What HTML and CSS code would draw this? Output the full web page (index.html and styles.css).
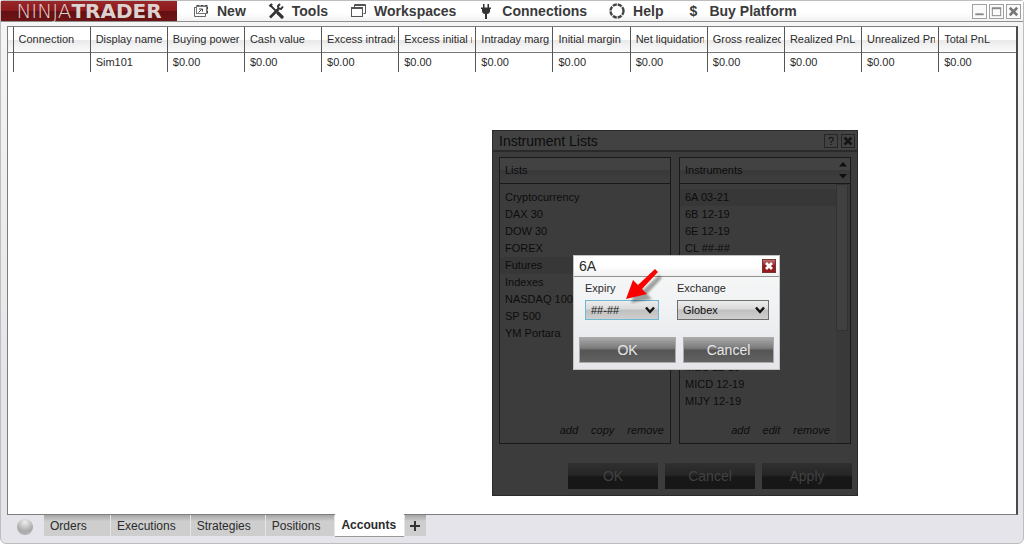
FILE: index.html
```html
<!DOCTYPE html>
<html lang="en">
<head>
<meta charset="utf-8">
<title>NinjaTrader Control Center</title>
<link rel="stylesheet" href="styles.css">
</head>
<body>
<div class="window">
  <header class="titlebar">
    <div class="logo"><span class="logo-light">NINJA</span><span class="logo-bold">TRADER</span></div>
    <nav class="menu" aria-label="Main menu">
      <button class="menu-item" type="button">
        <svg class="icon" viewBox="0 0 16 16" fill="none"><path d="M3.500 2.500h11v8" stroke="#444" stroke-dasharray="3 1"/><rect x="3.500" y="3.500" width="10" height="7" stroke="#777"/><path d="M1.500 4v9.500h11v-3M1.500 4.500h2" stroke="#666"/><path d="M5.500 9.500l3-3M6 6h3.500v2.500" stroke="#444"/></svg>
        New</button>
      <button class="menu-item" type="button">
        <svg class="icon" viewBox="0 0 16 16" fill="none" stroke="#333"><path d="M2 14.500l8.500-8.500" stroke-width="2.600"/><path d="M15 3.500l-2 2.500-2.500-.5L10 3l2-2" stroke-width="2"/><path d="M3 3l5.500 5.500" stroke-width="1.800"/><path d="M1.500 3.500l2.500-2.500" stroke-width="2.400"/><path d="M10 10l4 4" stroke-width="3.200" stroke-linecap="round"/></svg>
        Tools</button>
      <button class="menu-item" type="button">
        <svg class="icon" viewBox="0 0 16 16" fill="none" stroke="#555"><path d="M4.500 4V1.500h11v9h-2M4.500 2.500h11"/><rect x="1.500" y="4.500" width="11" height="9"/><path d="M1.500 5.500h11"/></svg>
        Workspaces</button>
      <button class="menu-item" type="button">
        <svg class="icon" viewBox="0 0 16 16" fill="#333"><path d="M5 1h1.500v3.500h3V1H11v3.500h2V6h-1v2c0 2-1.500 3-3 3v5H7v-5c-1.500 0-3-1-3-3V6H3V4.500h2z"/></svg>
        Connections</button>
      <button class="menu-item" type="button">
        <svg class="icon" viewBox="0 0 16 16" fill="none" stroke="#444"><circle cx="8" cy="8" r="6.500" stroke-width="2.400" stroke-dasharray="4.100 1.005"/></svg>
        Help</button>
      <button class="menu-item" type="button"><span class="icon dollar" aria-hidden="true">$</span>Buy Platform</button>
    </nav>
    <div class="controls">
      <button class="control" type="button" aria-label="Minimize"><svg viewBox="0 0 14 14"><path d="M2.500 10h9" stroke="#888" stroke-width="2"/></svg></button>
      <button class="control" type="button" aria-label="Maximize"><svg viewBox="0 0 14 14" fill="none" stroke="#888"><rect x="2.500" y="3.500" width="9" height="8"/><path d="M2 3.500h10" stroke-width="2"/></svg></button>
      <button class="control" type="button" aria-label="Close"><svg viewBox="0 0 14 14"><path d="M3 3l8 8M11 3l-8 8" stroke="#777" stroke-width="2.800"/></svg></button>
    </div>
  </header>

  <main class="content">
    <table class="accounts">
      <colgroup><col class="gutter"><col span="13"></colgroup>
      <thead>
        <tr><td></td><th><div>Connection</div></th><th><div>Display name</div></th><th><div>Buying power</div></th><th><div>Cash value</div></th><th><div>Excess intraday</div></th><th><div>Excess initial margin</div></th><th><div>Intraday margin</div></th><th><div>Initial margin</div></th><th><div>Net liquidation</div></th><th><div>Gross realized</div></th><th><div>Realized PnL</div></th><th><div>Unrealized PnL</div></th><th><div>Total PnL</div></th></tr>
      </thead>
      <tbody>
        <tr><td></td><td></td><td>Sim101</td><td>$0.00</td><td>$0.00</td><td>$0.00</td><td>$0.00</td><td>$0.00</td><td>$0.00</td><td>$0.00</td><td>$0.00</td><td>$0.00</td><td>$0.00</td><td>$0.00</td></tr>
      </tbody>
    </table>
  </main>

  <footer class="tabbar">
    <span class="status"></span>
    <div class="tabs">
      <button class="tab" type="button">Orders</button>
      <button class="tab" type="button">Executions</button>
      <button class="tab" type="button">Strategies</button>
      <button class="tab" type="button">Positions</button>
      <button class="tab active" type="button">Accounts</button>
      <button class="tab add-tab" type="button" aria-label="Add tab"><svg viewBox="0 0 10 10"><path d="M5 0v10M0 5h10" stroke="#333" stroke-width="2"/></svg></button>
    </div>
  </footer>

  <section class="lists-dialog" aria-label="Instrument Lists">
    <div class="lists-title">
      <h2>Instrument Lists</h2>
      <button class="dim-control" type="button">?</button>
      <button class="dim-control" type="button" aria-label="Close lists"><svg viewBox="0 0 12 12"><path d="M2.500 2.500l7 7M9.500 2.500l-7 7" stroke="#151515" stroke-width="2.600"/></svg></button>
    </div>
    <div class="panels">
      <div class="panel">
        <h3 class="panel-head">Lists</h3>
        <div class="panel-body">
          <ul class="items"><li>Cryptocurrency</li><li>DAX 30</li><li>DOW 30</li><li>FOREX</li><li class="selected">Futures</li><li>Indexes</li><li>NASDAQ 100</li><li>SP 500</li><li>YM Portara</li></ul>
          <div class="links"><a href="#">add</a><a href="#">copy</a><a href="#">remove</a></div>
        </div>
      </div>
      <div class="panel">
        <h3 class="panel-head">Instruments<svg class="sorter" viewBox="0 0 14 24" fill="#0e0e0e"><path d="M7 4l4 4.500H3zM7 20.500l4-4.500H3z"/></svg></h3>
        <div class="panel-body with-scroll">
          <ul class="items"><li class="selected">6A 03-21</li><li>6B 12-19</li><li>6E 12-19</li><li>CL ##-##</li><li class="blank-rows"></li><li>MES 12-19</li><li>MICD 12-19</li><li>MIJY 12-19</li></ul>
          <div class="links"><a href="#">add</a><a href="#">edit</a><a href="#">remove</a></div>
          <div class="scroll"><div class="thumb"></div></div>
        </div>
      </div>
    </div>
    <div class="lists-actions"><button type="button">OK</button><button type="button">Cancel</button><button type="button">Apply</button></div>
  </section>

  <form class="edit-dialog" aria-label="6A">
    <div class="edit-title">
      <h2>6A</h2>
      <button class="edit-close" type="button" aria-label="Close"><svg viewBox="0 0 12 12"><path d="M3 3l6 6M9 3l-6 6" stroke="#fff" stroke-width="2.800"/></svg></button>
    </div>
    <div class="fields">
      <div class="field">
        <label for="expiry">Expiry</label>
        <div class="select"><select id="expiry" class="focused"><option>##-##</option></select><svg viewBox="0 0 10 8"><path d="M1 1.500l4 4.500 4-4.500" fill="none" stroke="#111" stroke-width="2.400"/></svg></div>
      </div>
      <div class="field">
        <label for="exchange">Exchange</label>
        <div class="select"><select id="exchange"><option>Globex</option></select><svg viewBox="0 0 10 8"><path d="M1 1.500l4 4.500 4-4.500" fill="none" stroke="#111" stroke-width="2.400"/></svg></div>
      </div>
    </div>
    <div class="edit-actions"><button type="button">OK</button><button type="button">Cancel</button></div>
    <svg class="pointer" viewBox="0 0 40 40"><path class="pointer-shadow" d="M6 35l7-18 5 5L34 7l3 3-15 16 5 5z"/><path d="M1 31L8 12l5 5L30 1l3 3L17 21l5 5z" fill="#fb0000"/></svg>
  </form>
</div>
</body>
</html>
```
FILE: styles.css
```css
* { box-sizing: border-box; }
body {
  margin: 0;
  background: #fff;
  color: #2b2b2b;
  font: 11px/13px "Liberation Sans", Arial, sans-serif;
}
button, select { font: inherit; color: inherit; margin: 0; padding: 0; border: 0; background: none; }
h2, h3, ul { margin: 0; padding: 0; font-weight: normal; list-style: none; }
svg { display: block; }

.window {
  position: relative;
  display: flex;
  flex-direction: column;
  min-height: 100vh;
  padding-bottom: 6px;
  border: 1px solid #bdbdbd;
  border-radius: 3px 3px 6px 6px;
  background: linear-gradient(#f6f6f6, #ececec 40%, #e5e4ea 70%);
}

/* Title bar */
.titlebar {
  display: flex;
  align-items: center;
  height: 21px;
  border-bottom: 1px solid #8f8f8f;
  background: linear-gradient(#fff 60%, #f2f2f2);
}
.logo {
  display: flex;
  justify-content: center;
  align-items: center;
  align-self: stretch;
  width: 176px;
  background: linear-gradient(#98282a, #8d1a1d 48%, #641012 52%, #6d1416);
  color: #dcd2cf;
  font: 20px/20px "DejaVu Sans", sans-serif;
}
.logo-light { font-weight: 200; }
.logo-bold { font-weight: bold; }
.menu { display: flex; flex: 1; gap: 22px; padding-left: 16px; }
.menu-item {
  display: flex;
  align-items: center;
  gap: 8px;
  color: #3a3a3a;
  font-size: 14px;
  font-weight: bold;
  line-height: 20px;
  white-space: nowrap;
}
.icon { flex: none; width: 16px; height: 16px; }
.dollar { line-height: 16px; text-align: center; }
.controls { display: flex; gap: 2px; padding-right: 2px; }
.control { width: 15px; height: 15px; border: 1px solid #a0a0a0; background: #fafafa; }

/* Accounts grid */
.content {
  flex: 1;
  margin: 4px 5px 0 6px;
  border: 1px solid #7d7d7d;
  border-right: 2px solid #4a4a4a;
  background: #fff;
}
.accounts { width: 100%; border-collapse: collapse; table-layout: fixed; }
.gutter { width: 5px; }
.accounts th, .accounts td {
  padding: 0 3px 0 5px;
  border-left: 1px solid #555;
  font-weight: normal;
  text-align: left;
  white-space: nowrap;
}
.accounts th div { overflow: hidden; }
.accounts td:first-child { padding: 0; border-left: 0; }
.accounts thead tr {
  height: 25px;
  border-bottom: 1px solid #777;
  background: linear-gradient(#fff 54%, #e9e9e9 55%, #fafafa);
}
.accounts tbody tr { height: 20px; }

/* Bottom tabs */
.tabbar { display: flex; align-items: flex-start; padding-left: 16px; height: 22px; }
.status {
  width: 16px;
  height: 16px;
  margin: 4px 11px 0 0;
  border-radius: 50%;
  background: radial-gradient(circle at 50% 20%, #eee, #aaa 60%, #bbb);
}
.tabs { display: flex; gap: 1px; align-items: flex-start; }
.tab {
  min-width: 66px;
  height: 21px;
  padding: 0 14px 0 6px;
  background: linear-gradient(#a5a5a5, #cecece 30%);
  font-size: 12px;
  line-height: 20px;
  text-align: left;
}
.tab.active {
  height: 23px;
  margin-top: -1px;
  padding-right: 8px;
  border-bottom: 1px solid #999;
  background: #fff;
  font-weight: bold;
}
.tab.add-tab { min-width: 21px; padding: 0 5px; }
.add-tab svg { width: 10px; height: 10px; }

/* Dimmed lists window */
.lists-dialog {
  position: absolute;
  left: 491px;
  top: 129px;
  display: flex;
  flex-direction: column;
  width: 366px;
  height: 366px;
  border: 1px solid #2a2a2a;
  background: #3c3c3c;
  color: #0c0c0c;
}
.lists-title {
  display: flex;
  align-items: center;
  gap: 3px;
  height: 21px;
  padding: 0 2px 0 6px;
  border-bottom: 2px solid #2a2a2a;
  background: #424242;
}
.lists-title h2 { flex: 1; font-size: 14px; line-height: 18px; }
.dim-control { width: 14px; height: 14px; border: 1px solid #252525; font-size: 11px; line-height: 12px; }
.panels { display: flex; flex: 1; gap: 8px; padding: 5px 6px 0; }
.panel { display: flex; flex: 1; flex-direction: column; border: 1px solid #191919; }
.panel-head {
  display: flex;
  justify-content: space-between;
  height: 26px;
  padding-left: 5px;
  border-bottom: 1px solid #191919;
  background: linear-gradient(#424242 50%, #393939 50%, #3e3e3e);
  font-size: 11px;
  line-height: 25px;
}
.sorter { width: 14px; height: 24px; }
.panel-body { display: grid; flex: 1; grid-template-rows: 1fr auto; padding-top: 5px; }
.with-scroll { grid-template-columns: 1fr 14px; padding-top: 0; }
.with-scroll .items { padding-top: 5px; }
.with-scroll .scroll { grid-area: 1 / 2 / 3 / 3; }
.items li { height: 17px; padding-left: 5px; line-height: 17px; }
.items .selected { background: #373737; }
.items .blank-rows { height: 102px; }
.links { display: flex; justify-content: flex-end; gap: 13px; padding: 0 6px 6px 0; }
.links a { color: inherit; font-style: italic; text-decoration: none; }
.scroll { background: #393939; }
.thumb { width: 12px; height: 147px; border: 1px solid #323232; background: #404040; }
.lists-actions { display: flex; justify-content: flex-end; gap: 7px; padding: 19px 5px 6px; }
.lists-actions button {
  width: 90px;
  height: 26px;
  background: linear-gradient(#303030, #262626 45%, #171717 55%);
  color: #414141;
  font-size: 14px;
}

/* Expiry / exchange window */
.edit-dialog {
  position: absolute;
  left: 572px;
  top: 254px;
  width: 207px;
  height: 115px;
  border: 1px solid #c2c2c2;
  background: linear-gradient(#f8f8f8, #f1f3f4 40%, #e5e5ea);
}
.edit-title {
  display: flex;
  align-items: center;
  justify-content: space-between;
  height: 21px;
  padding: 0 3px 0 5px;
  border-bottom: 1px solid #919191;
  background: linear-gradient(#fff 50%, #f0f0f0);
}
.edit-title h2 { font-size: 14px; line-height: 20px; }
.edit-close { width: 14px; height: 14px; border: 1px solid #7a3434; background: linear-gradient(#b97474, #95191d 50%); }
.fields { display: grid; grid-template-columns: 74px 92px; gap: 18px; padding: 5px 11px 0; }
.field { display: grid; gap: 5px; }
.select { display: grid; align-items: center; }
.select select, .select svg { grid-area: 1 / 1; }
.select select {
  height: 20px;
  padding: 0 5px;
  border: 1px solid #6e6e6e;
  border-radius: 0;
  background: linear-gradient(#ececec, #dadada 45%, #c0c0c0 50%, #cfcfcf);
  color: #111;
  appearance: none;
}
.select .focused { border-color: #6eb8d4; }
.select svg { justify-self: end; width: 10px; height: 8px; margin-right: 4px; pointer-events: none; }
.edit-actions { display: grid; grid-template-columns: 97px 1fr; gap: 7px; padding: 17px 5px 0; }
.edit-actions button {
  height: 26px;
  border: 1px solid #aaa;
  background: linear-gradient(#a8a8a8, #7b7b7b 42%, #555 52%, #626262);
  color: #e6e6e6;
  font-size: 14px;
}
.pointer { position: absolute; left: 51px; top: 12px; width: 40px; height: 40px; pointer-events: none; }
.pointer-shadow { fill: #000; opacity: .35; filter: blur(1px); }
```
